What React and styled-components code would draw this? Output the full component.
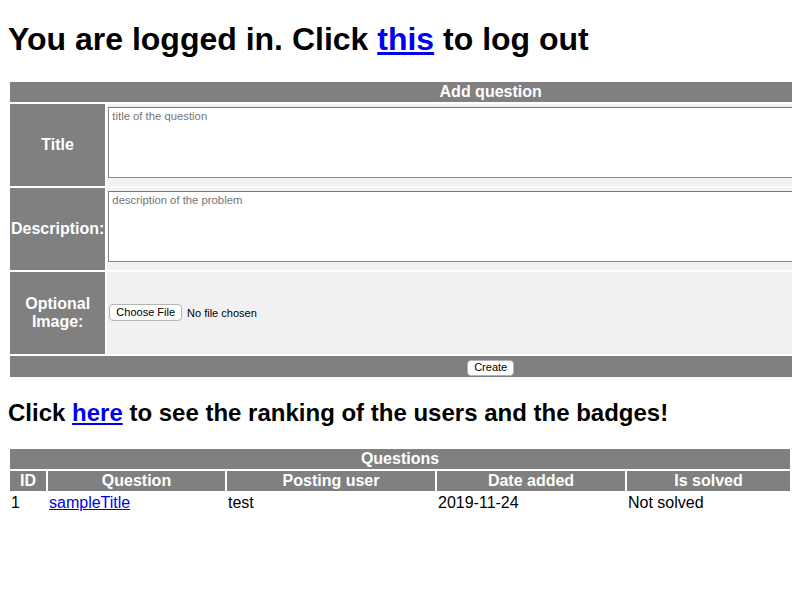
import React from "react";
import styled, { createGlobalStyle } from "styled-components";

const GlobalStyle = createGlobalStyle`
  html {
    overflow: hidden;
  }
  body {
    margin: 8px;
    overflow: visible !important;
    font-family: "Liberation Sans", Arial, sans-serif;
    font-size: 16px;
    color: #000;
    background: #fff;
  }
  #root {
    overflow: visible !important;
  }
`;

const Heading = styled.h1`
  font-size: 32px;
  font-weight: bold;
  margin: 13.44px 0 21.44px;
  line-height: 37px;
  white-space: nowrap;
`;

const SubHeading = styled.h2`
  font-size: 24px;
  font-weight: bold;
  margin: 19.92px 0;
  line-height: 28px;
  white-space: nowrap;
`;

const A = styled.a`
  color: #0000ee;
  text-decoration: underline;
  cursor: pointer;
`;

const Table = styled.table`
  border-collapse: separate;
  border-spacing: 2px;
  width: ${(props) => (props.$full ? "100%" : "auto")};
`;

const Th = styled.th`
  background-color: #808080;
  color: #fff;
  font-weight: bold;
  font-size: 16px;
  line-height: 18px;
  padding: 1px;
  text-align: center;
  vertical-align: middle;
  width: ${(props) => props.$w || "auto"};
`;

const LabelCell = styled.th`
  background-color: #808080;
  color: #fff;
  font-weight: bold;
  font-size: 16px;
  line-height: 18px;
  padding: 1px;
  width: 94px;
  height: 80px;
  text-align: center;
  vertical-align: middle;
`;

const FieldCell = styled.td`
  background-color: #f1f1f1;
  padding: 1px;
  vertical-align: middle;
`;

const TextArea = styled.textarea`
  display: block;
  box-sizing: border-box;
  width: 862px;
  height: 71px;
  margin: 2px 0 7px;
  padding: 2px 3px;
  border: 1px solid #8a8a8a;
  border-top-color: #767676;
  font-family: "Liberation Sans", Arial, sans-serif;
  font-size: 11.3px;
  resize: none;
  background: #fff;
  &::placeholder {
    color: #757575;
  }
`;

const FileRow = styled.div`
  display: flex;
  align-items: center;
  gap: 5px;
  padding-left: 1px;
  font-size: 11px;
`;

const SmallButton = styled.button`
  box-sizing: border-box;
  height: ${(props) => props.$h || "17px"};
  padding: 0 6px;
  font-family: "Liberation Sans", Arial, sans-serif;
  font-size: 11px;
  line-height: 1;
  color: #000;
  background: #fff;
  border: 1px solid #b4b4b4;
  border-radius: 4px;
`;

const FooterCell = styled.td`
  background-color: #808080;
  padding: 1px;
  height: 19px;
  text-align: center;
  vertical-align: middle;
`;

const Td = styled.td`
  padding: 1px;
  font-size: 16px;
  line-height: 18px;
  text-align: left;
`;

const questions = [
  { id: 1, title: "sampleTitle", user: "test", date: "2019-11-24", solved: "Not solved" },
];

export default function App() {
  return (
    <>
      <GlobalStyle />
      <Heading>
        You are logged in. Click <A>this</A> to log out
      </Heading>

      <Table>
        <tbody>
          <tr>
            <Th colSpan={2}>Add question</Th>
          </tr>
          <tr>
            <LabelCell>Title</LabelCell>
            <FieldCell>
              <TextArea placeholder="title of the question" />
            </FieldCell>
          </tr>
          <tr>
            <LabelCell>Description:</LabelCell>
            <FieldCell>
              <TextArea placeholder="description of the problem" />
            </FieldCell>
          </tr>
          <tr>
            <LabelCell>
              Optional
              <br />
              Image:
            </LabelCell>
            <FieldCell>
              <FileRow>
                <SmallButton>Choose File</SmallButton>
                <span>No file chosen</span>
              </FileRow>
            </FieldCell>
          </tr>
          <tr>
            <FooterCell colSpan={2}>
              <SmallButton $h="16px">Create</SmallButton>
            </FooterCell>
          </tr>
        </tbody>
      </Table>

      <SubHeading>
        Click <A>here</A> to see the ranking of the users and the badges!
      </SubHeading>

      <Table $full>
        <tbody>
          <tr>
            <Th colSpan={5}>Questions</Th>
          </tr>
          <tr>
            <Th $w="34px">ID</Th>
            <Th $w="175px">Question</Th>
            <Th $w="206px">Posting user</Th>
            <Th $w="186px">Date added</Th>
            <Th>Is solved</Th>
          </tr>
          {questions.map((q) => (
            <tr key={q.id}>
              <Td>{q.id}</Td>
              <Td>
                <A>{q.title}</A>
              </Td>
              <Td>{q.user}</Td>
              <Td>{q.date}</Td>
              <Td>{q.solved}</Td>
            </tr>
          ))}
        </tbody>
      </Table>
    </>
  );
}
